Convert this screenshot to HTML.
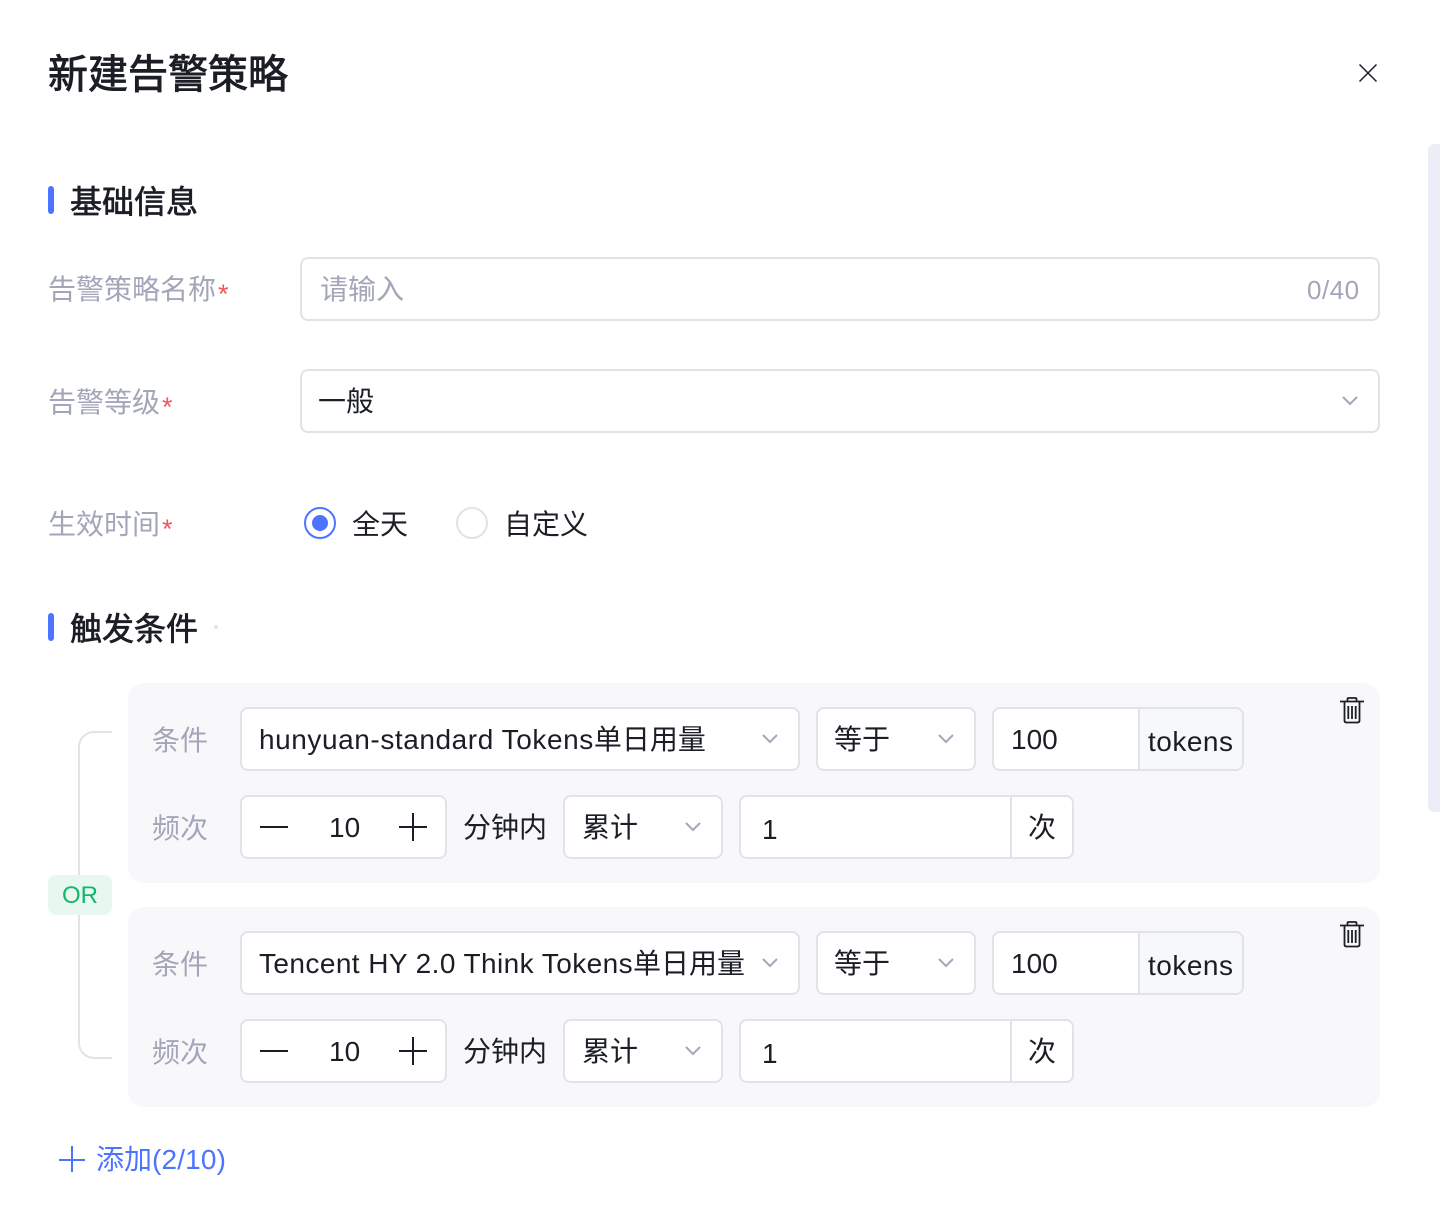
<!DOCTYPE html>
<html lang="zh"><head><meta charset="utf-8"><title>新建告警策略</title>
<style>
html,body{margin:0;padding:0;background:#fff}
body{position:relative;width:1440px;height:1226px;overflow:hidden;font-family:"Liberation Sans","Noto Sans CJK SC",sans-serif;font-size:28px;color:#1c1e26}
.a,.t,.b{position:absolute;box-sizing:border-box}
.t{white-space:nowrap;line-height:40px;height:40px}
.b{border:2px solid #e1e2ea;border-radius:8px;background:#fff;height:64px}
.l{color:#a3a6b8}
.star{color:#f5535e;font-size:27px;position:relative;top:4px;margin-left:2px}
.g{position:absolute;left:128px;width:1252px;height:200px;background:#f8f8fb;border-radius:16px}
.h{-webkit-text-stroke:.7px #1c1e26}
.s1{letter-spacing:.57px}
.s2{letter-spacing:.42px}
.s3{letter-spacing:.5px}
svg{position:absolute;overflow:visible}
</style></head><body>
<div class="t h" style="left:48px;top:50px;height:50px;line-height:50px;font-size:40px;-webkit-text-stroke-width:.9px">新建告警策略</div>
<svg style="left:1358px;top:63px" width="20" height="20" fill="none" stroke="#1c1e26" stroke-width="1.500"><path d="M1.500 1.500L18.500 18.500M18.500 1.500L1.500 18.500"/></svg>
<div class="a" style="left:1428px;top:144px;width:12px;height:668px;background:#eceef7;border-radius:6px 0 0 6px"></div>

<div class="a" style="left:48px;top:186px;width:6px;height:28px;background:#4c74ff;border-radius:3px"></div>
<div class="t h" style="left:70px;top:182px;font-size:32px">基础信息</div>

<div class="t l" style="left:48px;top:270px">告警策略名称<span class="star">*</span></div>
<div class="b" style="left:300px;top:257px;width:1080px"></div>
<div class="t l" style="left:320px;top:270px">请输入</div>
<div class="t l s3" style="left:1307px;top:270px;font-size:26px">0/40</div>

<div class="t l" style="left:48px;top:383px">告警等级<span class="star">*</span></div>
<div class="b" style="left:300px;top:369px;width:1080px"></div>
<div class="t" style="left:318px;top:382px">一般</div>
<svg style="left:1342px;top:396px" width="16" height="10" fill="none" stroke="#a3a6b8" stroke-width="2"><path d="M1 1L8 8L15 1"/></svg>

<div class="t l" style="left:48px;top:505px">生效时间<span class="star">*</span></div>
<div class="a" style="left:304px;top:507px;width:32px;height:32px;border:2px solid #4c74ff;border-radius:50%"></div>
<div class="a" style="left:312px;top:515px;width:16px;height:16px;background:#4c74ff;border-radius:50%"></div>
<div class="t" style="left:352px;top:505px">全天</div>
<div class="a" style="left:456px;top:507px;width:32px;height:32px;border:2px solid #e1e2ea;border-radius:50%"></div>
<div class="t" style="left:504px;top:505px">自定义</div>

<div class="a" style="left:48px;top:613px;width:6px;height:28px;background:#4c74ff;border-radius:3px"></div>
<div class="t h" style="left:70px;top:609px;font-size:32px">触发条件</div>
<div class="a" style="left:214px;top:625px;width:4px;height:4px;background:#e1e2ea;border-radius:50%"></div>

<div class="a" style="left:78px;top:731px;width:34px;height:328px;border:2px solid #e1e2ea;border-right:0;border-radius:16px 0 0 16px"></div>
<div class="a" style="left:48px;top:875px;width:64px;height:40px;background:#e8f8f0;border-radius:8px;color:#12b76e;font-size:24px;line-height:42px;text-align:center">OR</div>

<!-- group 1 -->
<div class="g" style="top:683px"></div>
<div class="t l" style="left:152px;top:721px">条件</div>
<div class="b" style="left:240px;top:707px;width:560px"></div>
<div class="t" style="left:259px;top:720px"><span class="s1">hunyuan-standard Tokens</span>单日用量</div>
<svg style="left:762px;top:734px" width="16" height="10" fill="none" stroke="#a3a6b8" stroke-width="2"><path d="M1 1L8 8L15 1"/></svg>
<div class="b" style="left:816px;top:707px;width:160px"></div>
<div class="t" style="left:834px;top:720px">等于</div>
<svg style="left:938px;top:734px" width="16" height="10" fill="none" stroke="#a3a6b8" stroke-width="2"><path d="M1 1L8 8L15 1"/></svg>
<div class="b" style="left:992px;top:707px;width:252px"></div>
<div class="a" style="left:1138px;top:709px;width:104px;height:60px;background:#f7f8fb;border-left:2px solid #e1e2ea;border-radius:0 6px 6px 0"></div>
<div class="t" style="left:1011px;top:720px">100</div>
<div class="t s3" style="left:1148px;top:722px">tokens</div>
<svg style="left:1340px;top:697px" width="24" height="28" fill="none" stroke="#1c1e26" stroke-width="1.800"><path d="M0 4.500H24M7.500 4V2Q7.500 1 8.500 1H15.500Q16.500 1 16.500 2V4M4.500 4.500V23.500Q4.500 25.500 6.500 25.500H17.500Q19.500 25.500 19.500 23.500V4.500M8.300 9V22M12 9V22M15.700 9V22"/></svg>

<div class="t l" style="left:152px;top:809px">频次</div>
<div class="b" style="left:240px;top:795px;width:207px"></div>
<div class="a" style="left:260px;top:826px;width:28px;height:2px;background:#1c1e26"></div>
<div class="t" style="left:329px;top:808px">10</div>
<div class="a" style="left:399px;top:826px;width:28px;height:2px;background:#1c1e26"></div>
<div class="a" style="left:412px;top:813px;width:2px;height:28px;background:#1c1e26"></div>
<div class="t" style="left:463px;top:808px">分钟内</div>
<div class="b" style="left:563px;top:795px;width:160px"></div>
<div class="t" style="left:582px;top:808px">累计</div>
<svg style="left:685px;top:822px" width="16" height="10" fill="none" stroke="#a3a6b8" stroke-width="2"><path d="M1 1L8 8L15 1"/></svg>
<div class="b" style="left:739px;top:795px;width:335px"></div>
<div class="a" style="left:1010px;top:797px;width:2px;height:60px;background:#e1e2ea"></div>
<div class="t" style="left:762px;top:810px">1</div>
<div class="t" style="left:1028px;top:808px">次</div>

<!-- group 2 -->
<div class="g" style="top:907px"></div>
<div class="t l" style="left:152px;top:945px">条件</div>
<div class="b" style="left:240px;top:931px;width:560px"></div>
<div class="t" style="left:259px;top:944px"><span class="s2">Tencent HY 2.0 Think Tokens</span>单日用量</div>
<svg style="left:762px;top:958px" width="16" height="10" fill="none" stroke="#a3a6b8" stroke-width="2"><path d="M1 1L8 8L15 1"/></svg>
<div class="b" style="left:816px;top:931px;width:160px"></div>
<div class="t" style="left:834px;top:944px">等于</div>
<svg style="left:938px;top:958px" width="16" height="10" fill="none" stroke="#a3a6b8" stroke-width="2"><path d="M1 1L8 8L15 1"/></svg>
<div class="b" style="left:992px;top:931px;width:252px"></div>
<div class="a" style="left:1138px;top:933px;width:104px;height:60px;background:#f7f8fb;border-left:2px solid #e1e2ea;border-radius:0 6px 6px 0"></div>
<div class="t" style="left:1011px;top:944px">100</div>
<div class="t s3" style="left:1148px;top:946px">tokens</div>
<svg style="left:1340px;top:921px" width="24" height="28" fill="none" stroke="#1c1e26" stroke-width="1.800"><path d="M0 4.500H24M7.500 4V2Q7.500 1 8.500 1H15.500Q16.500 1 16.500 2V4M4.500 4.500V23.500Q4.500 25.500 6.500 25.500H17.500Q19.500 25.500 19.500 23.500V4.500M8.300 9V22M12 9V22M15.700 9V22"/></svg>

<div class="t l" style="left:152px;top:1033px">频次</div>
<div class="b" style="left:240px;top:1019px;width:207px"></div>
<div class="a" style="left:260px;top:1050px;width:28px;height:2px;background:#1c1e26"></div>
<div class="t" style="left:329px;top:1032px">10</div>
<div class="a" style="left:399px;top:1050px;width:28px;height:2px;background:#1c1e26"></div>
<div class="a" style="left:412px;top:1037px;width:2px;height:28px;background:#1c1e26"></div>
<div class="t" style="left:463px;top:1032px">分钟内</div>
<div class="b" style="left:563px;top:1019px;width:160px"></div>
<div class="t" style="left:582px;top:1032px">累计</div>
<svg style="left:685px;top:1046px" width="16" height="10" fill="none" stroke="#a3a6b8" stroke-width="2"><path d="M1 1L8 8L15 1"/></svg>
<div class="b" style="left:739px;top:1019px;width:335px"></div>
<div class="a" style="left:1010px;top:1021px;width:2px;height:60px;background:#e1e2ea"></div>
<div class="t" style="left:762px;top:1034px">1</div>
<div class="t" style="left:1028px;top:1032px">次</div>

<!-- add -->
<div class="a" style="left:59px;top:1159px;width:26px;height:2px;background:#4c74ff"></div>
<div class="a" style="left:71px;top:1146px;width:2px;height:26px;background:#4c74ff"></div>
<div class="t" style="left:96px;top:1140px;color:#4c74ff"><span>添加</span><span style="letter-spacing:.15px">(2/10)</span></div>
</body></html>
